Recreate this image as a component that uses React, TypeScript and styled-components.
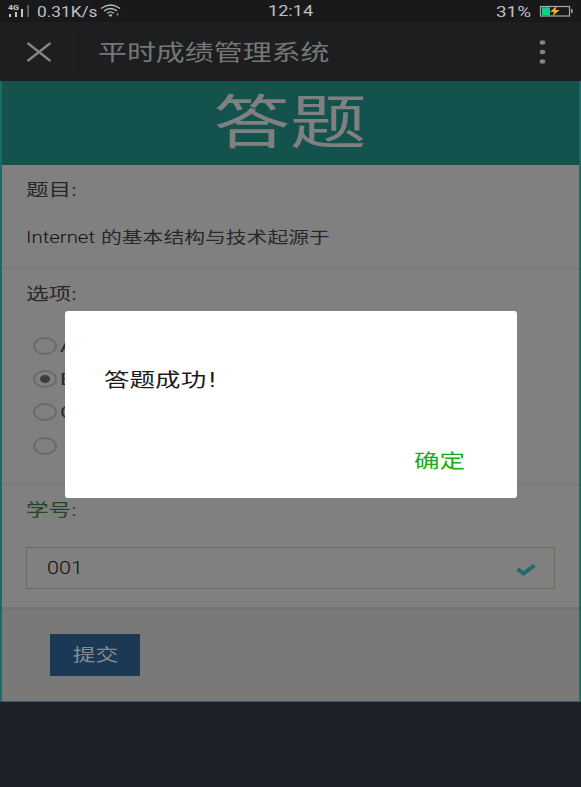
import React from "react";
import styled, { createGlobalStyle } from "styled-components";

const Global = createGlobalStyle`
  * { box-sizing: border-box; }
  body { margin: 0; background: #1c2029; }
  body, input, button { font-family: Roboto, "Noto Sans CJK SC", sans-serif; }
`;

const Screen = styled.main`
  position: relative;
  display: flex;
  flex-direction: column;
  width: 581px;
  height: 787px;
  overflow: hidden;
  background: #1c2029;
`;

/* Wide type: glyphs are stretched horizontally from their left edge. */
const Wide = styled.span<{ $size: number; $scale?: number; $color?: string; $center?: boolean; $weight?: number }>`
  display: inline-block;
  flex: none;
  white-space: pre;
  font-size: ${(p) => p.$size}px;
  font-weight: ${(p) => p.$weight ?? 400};
  color: ${(p) => p.$color ?? "#282829"};
  transform: scaleX(${(p) => p.$scale ?? 1.3});
  transform-origin: ${(p) => (p.$center ? "center" : "left center")};
`;

const StatusBar = styled.header`
  display: grid;
  grid-template-columns: 268px 228px 1fr;
  height: 22px;
  line-height: 24px;
  background: #19191b;
`;

const StatusGroup = styled.div`
  display: flex;
  align-items: flex-start;
  height: 22px;
`;

const SignalIcon = styled.svg`
  flex: none;
  width: 37px;
  height: 22px;
`;
const Speed = styled.div`
  width: 63px;
`;
const WifiIcon = styled.svg`
  width: 24px;
  height: 22px;
`;
const Percent = styled.div`
  width: 43px;
`;
const BatteryIcon = styled.svg`
  width: 36px;
  height: 22px;
`;

const AppBar = styled.nav`
  display: flex;
  align-items: center;
  height: 59px;
  padding-left: 26px;
  line-height: 30px;
  background: #1d1e20;
`;
const Title = styled.div`
  height: 30px;
  margin-top: 2px;
`;
const CloseIcon = styled.svg`
  width: 26px;
  height: 20px;
`;
const Divider = styled.i`
  width: 2px;
  height: 30px;
  margin: 0 19px 0 25px;
  background: #19191b;
`;
const MoreIcon = styled.svg`
  width: 8px;
  height: 26px;
  margin: 0 35px 0 auto;
`;

const Page = styled.div`
  display: flex;
  flex-direction: column;
  height: 621px;
  border: solid #1a6d65;
  border-width: 0 2px 1px;
  background: #808080;
`;

const Banner = styled.h1`
  display: flex;
  justify-content: center;
  height: 84px;
  margin: 0;
  line-height: 85px;
  background: #14534d;
`;

const Section = styled.section<{ $height: number }>`
  height: ${(p) => p.$height}px;
  padding: 12px 24px 0;
  border-bottom: 1px solid #757575;
  line-height: 27px;
`;
const Line = styled.div<{ $gap?: number }>`
  display: flex;
  height: 26px;
  margin-top: ${(p) => p.$gap ?? 0}px;
`;
const Term = styled.div`
  width: 75px;
`;

const Options = styled.div`
  margin: 22px 0 0 7px;
`;
const Option = styled.label`
  display: flex;
  align-items: center;
  gap: 3px;
  height: 33.3px;
  line-height: 32px;
`;
const Radio = styled.span`
  display: flex;
  align-items: center;
  justify-content: center;
  width: 24px;
  height: 18px;
  border: 2px solid #6a6a6a;
  border-radius: 50%;
`;
const Dot = styled.i`
  width: 10px;
  height: 8px;
  border-radius: 50%;
  background: #3b3b3b;
`;

const Field = styled.div`
  display: flex;
  align-items: center;
  justify-content: space-between;
  width: 529px;
  height: 42px;
  margin-top: 24px;
  padding: 0 18px 0 20px;
  border: 1px solid #656d58;
`;
const CheckIcon = styled.svg`
  width: 20px;
  height: 13px;
  margin-top: 3px;
`;

const Footer = styled.footer`
  flex: 1;
  padding: 24px 48px;
  border-top: 2px solid #737373;
  background: #797979;
`;
const Submit = styled.button`
  display: flex;
  align-items: center;
  justify-content: center;
  width: 90px;
  height: 42px;
  padding: 0 0 3px;
  border: 1px solid #1c3c59;
  background: #1b3854;
`;

const Dialog = styled.div`
  position: absolute;
  left: 65px;
  top: 311px;
  display: flex;
  flex-direction: column;
  justify-content: space-between;
  width: 452px;
  height: 187px;
  padding: 55px 52px 21px 39px;
  border-radius: 3px;
  background: #fff;
  line-height: 30px;
`;
const Message = styled.p`
  display: flex;
  gap: 27px;
  margin: 0;
`;
const Confirm = styled.button`
  align-self: flex-end;
  width: 51px;
  height: 30px;
  padding: 0;
  border: 0;
  background: none;
  line-height: 30px;
  text-align: left;
`;

const options = [
  { mark: "A", checked: false },
  { mark: "B", checked: true },
  { mark: "C", checked: false },
  { mark: "", checked: false },
];

export default function App() {
  return (
    <Screen>
      <Global />
      <StatusBar>
        <StatusGroup>
          <SignalIcon viewBox="0 0 37 22">
            <text x="8" y="10" fontSize="7" fontWeight="700" textLength="11" lengthAdjust="spacingAndGlyphs" fill="#c8c8c8">4G</text>
            <path d="M9 14h2v3H9zM15 12h2v5h-2zM21 9h2v8h-2z" fill="#c8c8c8" />
            <path d="M27.3 5h1.700v12h-1.700z" fill="#6c6c6d" />
          </SignalIcon>
          <Speed><Wide $size={14.5} $scale={1.19} $color="#c0c0c0">0.31K/s</Wide></Speed>
          <WifiIcon viewBox="0 0 24 22" fill="none" stroke="#c0c0c0" strokeWidth="1.4">
            <path d="M1 8.500Q10.500 1.500 20 8.500M4 11Q10.500 6 17 11M7 13.200Q10.500 10.500 14 13.200" />
            <path d="M8.500 15Q10.500 13.500 12.500 15L10.500 17Z" fill="#c0c0c0" stroke="none" />
            <path d="M17.500 12.500v4M16 14.500h3" strokeWidth=".8" stroke="#777" />
          </WifiIcon>
        </StatusGroup>
        <StatusGroup><Wide $size={14.5} $scale={1.25} $color="#c0c0c0">12:14</Wide></StatusGroup>
        <StatusGroup>
          <Percent><Wide $size={14.5} $color="#c0c0c0">31%</Wide></Percent>
          <BatteryIcon viewBox="0 0 36 22">
            <rect x="1.500" y="6.500" width="29" height="9.500" fill="none" stroke="#aaa" strokeWidth="1.200" />
            <path d="M3 7.300h8v8H3z" fill="#08d58a" />
            <path d="M17.500 6l-6.500 6h4l-1.500 4.200 7-6.200h-4z" fill="#edb51c" />
            <path d="M32 9h1.500v4H32z" fill="#aaa" />
          </BatteryIcon>
        </StatusGroup>
      </StatusBar>
      <AppBar>
        <CloseIcon viewBox="0 0 26 20"><path d="M1.500 1L24.500 19M24.500 1L1.500 19" stroke="#858585" strokeWidth="2.300" /></CloseIcon>
        <Divider />
        <Title><Wide $size={22} $scale={1.315} $color="#777">平时成绩管理系统</Wide></Title>
        <MoreIcon viewBox="0 0 8 26" fill="#858585">
          <ellipse cx="4.500" cy="3.500" rx="2.800" ry="2.200" />
          <ellipse cx="4.500" cy="13" rx="2.800" ry="2.200" />
          <ellipse cx="4.500" cy="22.500" rx="2.800" ry="2.200" />
        </MoreIcon>
      </AppBar>
      <Page>
        <Banner><Wide $size={58} $scale={1.32} $color="#808080" $center>答题</Wide></Banner>
        <Section $height={104}>
          <Line><Wide $size={17} $scale={1.33}>题目:</Wide></Line>
          <Line $gap={21}>
            <Term><Wide $size={17} $scale={1.2} $weight={300} $color="#111">Internet</Wide></Term>
            <Wide $size={16}>的基本结构与技术起源于</Wide>
          </Line>
        </Section>
        <Section $height={216}>
          <Line><Wide $size={17} $scale={1.33}>选项:</Wide></Line>
          <Options>
            {options.map((o, i) => (
              <Option key={i}>
                <Radio>{o.checked && <Dot />}</Radio>
                <Wide $size={17}>{o.mark}</Wide>
              </Option>
            ))}
          </Options>
        </Section>
        <Section $height={123}>
          <Line><Wide $size={17} $scale={1.33} $color="#244524">学号:</Wide></Line>
          <Field>
            <Wide $size={18.5} $scale={1.17} $weight={300} $color="#111">001</Wide>
            <CheckIcon viewBox="0 0 20 13"><path d="M1.500 6L7.500 10.500L18.500 2.500" fill="none" stroke="#226b68" strokeWidth="4" /></CheckIcon>
          </Field>
        </Section>
        <Footer>
          <Submit><Wide $size={17.5} $color="#858c92" $center>提交</Wide></Submit>
        </Footer>
      </Page>
      <Dialog role="dialog">
        <Message>
          <Wide $size={19.5} $scale={1.31} $color="#1c1c1c">答题成功</Wide>
          <Wide $size={19.5} $scale={1.31} $color="#1c1c1c">!</Wide>
        </Message>
        <Confirm><Wide $size={19.5} $scale={1.31} $color="#19ad19">确定</Wide></Confirm>
      </Dialog>
    </Screen>
  );
}
